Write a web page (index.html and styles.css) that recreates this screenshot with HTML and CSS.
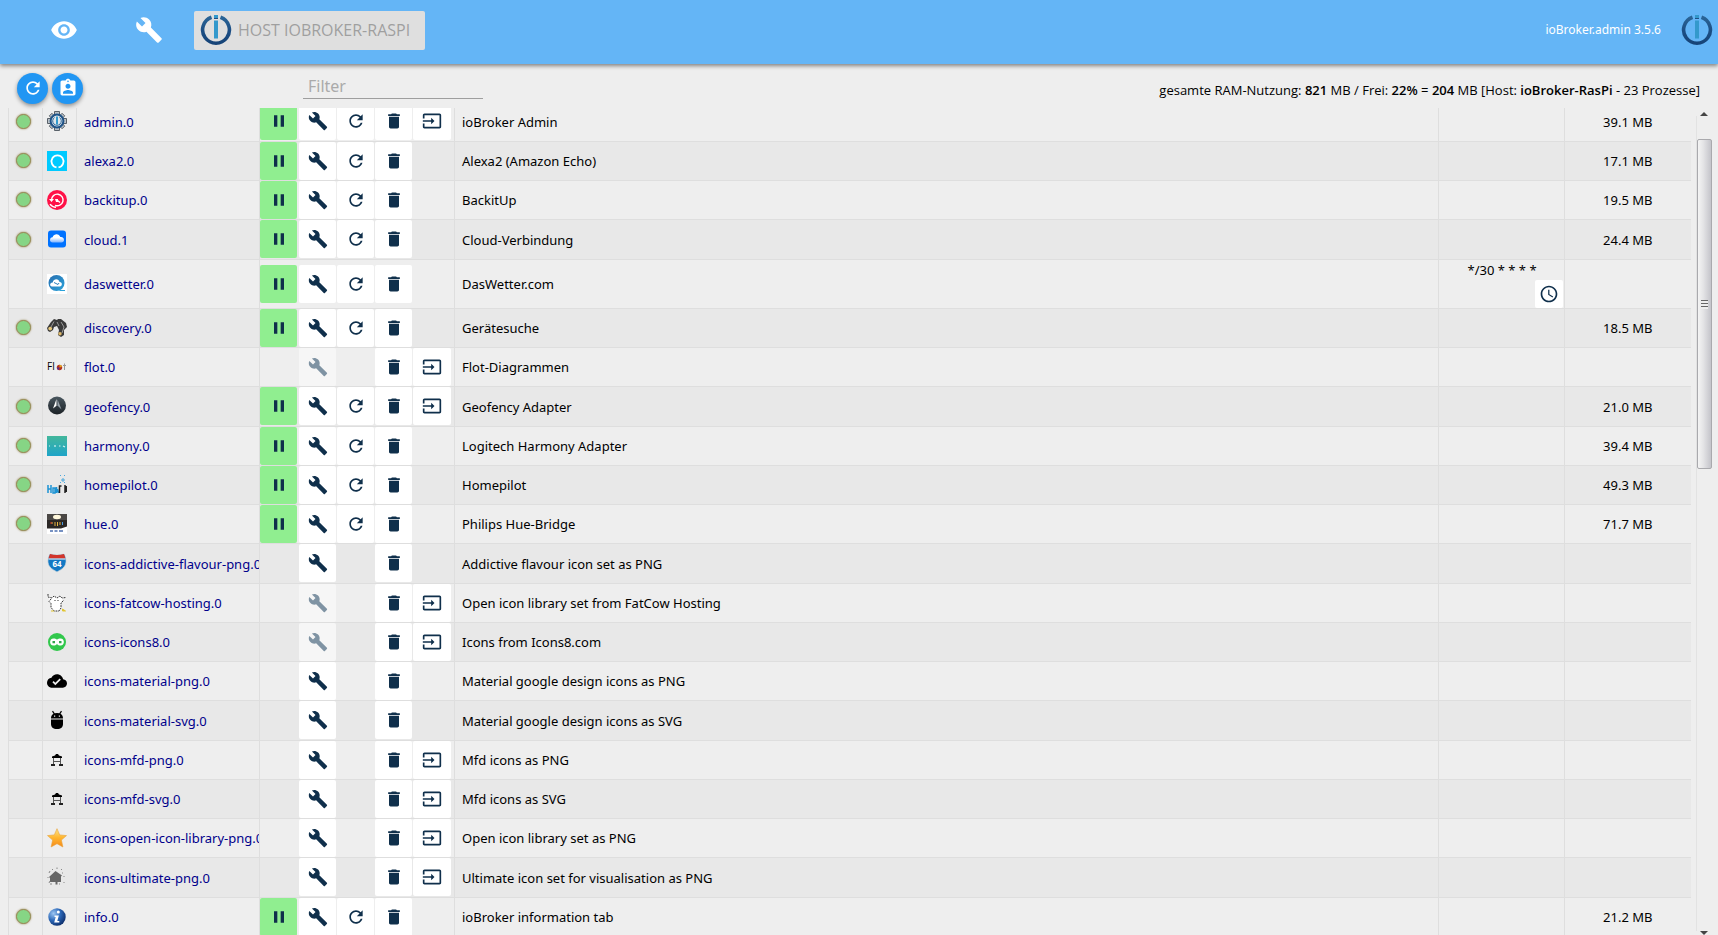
FILE: index.html
```
<!DOCTYPE html>
<html lang="de">
<head>
<meta charset="utf-8">
<title>ioBroker.admin</title>
<link rel="stylesheet" href="styles.css">
</head>
<body>
<svg class="sprite" aria-hidden="true">
  <defs>
    <linearGradient id="ring" x1="0" y1="0" x2="0" y2="1"><stop offset="0" stop-color="#2a6496"/><stop offset=".5" stop-color="#1d4f85"/><stop offset="1" stop-color="#164478"/></linearGradient>
    <linearGradient id="teal" x1="0" y1="0" x2="0" y2="1"><stop offset="0" stop-color="#43b79c"/><stop offset="1" stop-color="#1ea4c8"/></linearGradient>
    <linearGradient id="gold" x1="0" y1="0" x2="0" y2="1"><stop offset="0" stop-color="#fde58a"/><stop offset=".5" stop-color="#ffb52e"/><stop offset="1" stop-color="#f58a1c"/></linearGradient>
    <linearGradient id="slate" x1="0" y1="0" x2="0" y2="1"><stop offset="0" stop-color="#4a575f"/><stop offset="1" stop-color="#1b2126"/></linearGradient>
    <linearGradient id="cloudfill" x1="0" y1="0" x2="0" y2="1"><stop offset=".4" stop-color="#fff"/><stop offset="1" stop-color="#7fb4ff"/></linearGradient>
    <linearGradient id="sea" x1="0" y1="0" x2="1" y2="1"><stop offset="0" stop-color="#2a6fb0"/><stop offset="1" stop-color="#2aa2da"/></linearGradient>
    <radialGradient id="ball" cx=".3" cy=".3" r=".8"><stop offset="0" stop-color="#9cc6f2"/><stop offset=".5" stop-color="#2c68b8"/><stop offset="1" stop-color="#0b2a66"/></radialGradient>
  </defs>
  <symbol id="eye" viewBox="0 0 24 24"><path d="M12 4.500C7 4.500 2.730 7.610 1 12c1.730 4.390 6 7.500 11 7.500s9.270-3.110 11-7.500c-1.730-4.390-6-7.500-11-7.500zM12 17c-2.760 0-5-2.240-5-5s2.240-5 5-5 5 2.240 5 5-2.240 5-5 5zm0-8c-1.660 0-3 1.340-3 3s1.340 3 3 3 3-1.340 3-3-1.340-3-3-3z"/></symbol>
  <symbol id="build" viewBox="0 0 24 24"><path d="M22.700 19l-9.100-9.100c.9-2.300.4-5-1.500-6.900-2-2-5-2.400-7.400-1.300L9 6 6 9 1.600 4.700C.4 7.100.9 10.100 2.900 12.100c1.900 1.900 4.600 2.400 6.900 1.500l9.100 9.100c.4.4 1 .4 1.400 0l2.300-2.300c.5-.4.5-1.100.1-1.400z"/></symbol>
  <symbol id="refresh" viewBox="0 0 24 24"><path d="M17.650 6.350C16.200 4.900 14.210 4 12 4c-4.420 0-7.990 3.580-7.990 8s3.570 8 7.990 8c3.730 0 6.840-2.550 7.730-6h-2.080c-.82 2.330-3.040 4-5.650 4-3.310 0-6-2.690-6-6s2.690-6 6-6c1.660 0 3.140.69 4.220 1.780L13 11h7V4l-2.350 2.350z"/></symbol>
  <symbol id="badge" viewBox="0 0 24 24"><path d="M19 3h-4.180C14.400 1.840 13.300 1 12 1c-1.300 0-2.400.84-2.820 2H5c-1.100 0-2 .9-2 2v14c0 1.100.9 2 2 2h14c1.100 0 2-.9 2-2V5c0-1.100-.9-2-2-2zm-7 0c.55 0 1 .45 1 1s-.45 1-1 1-1-.45-1-1 .45-1 1-1zm0 4c1.660 0 3 1.340 3 3s-1.340 3-3 3-3-1.340-3-3 1.340-3 3-3zm6 12H6v-1.400c0-2 4-3.100 6-3.100s6 1.100 6 3.100V19z"/></symbol>
  <symbol id="pause" viewBox="0 0 24 24"><path d="M6 19h4V5H6v14zm8-14v14h4V5h-4z"/></symbol>
  <symbol id="delete" viewBox="0 0 24 24"><path d="M6 19c0 1.100.9 2 2 2h8c1.100 0 2-.9 2-2V7H6v12zM19 4h-3.500l-1-1h-5l-1 1H5v2h14V4z"/></symbol>
  <symbol id="input" viewBox="0 0 24 24"><path d="M21 3.010H3c-1.100 0-2 .9-2 2V9h2V4.990h18v14.030H3V15H1v4.010c0 1.100.9 1.980 2 1.980h18c1.100 0 2-.88 2-1.980v-14c0-1.110-.9-2-2-2zM11 16l4-4-4-4v3H1v2h10v3z"/></symbol>
  <symbol id="clock" viewBox="0 0 24 24"><path d="M11.990 2C6.470 2 2 6.480 2 12s4.470 10 9.990 10C17.520 22 22 17.520 22 12S17.520 2 11.990 2zM12 20c-4.420 0-8-3.580-8-8s3.580-8 8-8 8 3.580 8 8-3.580 8-8 8zm.5-13H11v6l5.250 3.150.75-1.230-4.500-2.670z"/></symbol>
  <symbol id="logo" viewBox="0 0 32 32"><path d="M11.500 3.200A13.400 13.400 0 1 0 20.500 3.200" fill="none" stroke="url(#ring)" stroke-width="3.600"/><path d="M14 1h4v3h-4zM14 6.500h4v18h-4z" fill="#3399cc"/><path d="M14 4h4v1h-4z" fill="#1d4f85"/></symbol>

  <symbol id="admin" viewBox="0 0 20 20"><g fill="#b9c0c6" stroke="#596169" stroke-width="1"><path d="M7.500.5h5v4h-5zM7.500 15.500h5v4h-5zM.5 7.500h4v5h-4zM15.500 7.500h4v5h-4z"/><path d="M2.300 4.900l2.600-2.600 3 3-2.600 2.600zM12.100 14.700l2.600-2.600 3 3-2.600 2.600zM15.100 2.300l2.600 2.600-3 3-2.600-2.600zM5.300 12.100l2.600 2.600-3 3-2.600-2.600z"/></g><circle cx="10" cy="10" r="6.400" fill="#dfe6ea" stroke="#1d5287" stroke-width="2"/><path d="M7.500 6.500a4.300 4.300 0 1 0 5 0" fill="none" stroke="#2a659b"/><path d="M9 5.500h2v8H9z" fill="#3399cc"/></symbol>
  <symbol id="alexa" viewBox="0 0 20 20"><path d="M0 0h20v20H0z" fill="#00caff"/><path d="M9.500 16.300a6 6 0 1 1 2 0" fill="none" stroke="#fff" stroke-width="1.800"/></symbol>
  <symbol id="backitup" viewBox="0 0 20 20"><circle cx="10" cy="10" r="10" fill="#ff1147"/><path d="M4.500 10A5.800 5.800 0 1 1 8 15.300M3 14.200a8 8 0 0 0 6 3.200M10 10l3 2.500" fill="none" stroke="#fff" stroke-width="1.400"/><path d="M2 9h5l-2.500 3zM8 9h3v3H9z" fill="#fff"/></symbol>
  <symbol id="cloud" viewBox="0 0 20 20"><rect x="1" y="1.500" width="18" height="17" rx="3" fill="#0072ff"/><path d="M3 11c0-2 1.500-2.700 2.600-2.700C6.500 5.700 9 5 10.500 5.500c1.500.3 2.500 1.300 2.800 2.500 2.600-.2 3.700 1.200 3.700 3 0 1.500-1 2.500-2.500 2.500h-9C4 13.500 3 12.500 3 11z" fill="url(#cloudfill)"/></symbol>
  <symbol id="daswetter" viewBox="0 0 20 20"><path d="M0 0h20v20H0z" fill="#fff"/><circle cx="9.500" cy="9" r="8" fill="url(#sea)"/><path d="M12 16h6v1h-5z" fill="#2aa2da"/><path d="M5 12.500c-3-.5-2-4.200.7-4C6.500 4 12 4.200 12.500 8c3-.3 3.200 4.200.3 4.500z" fill="#fff"/><path d="M7 8.500l4 2 1-1.500" fill="none" stroke="#2a7fbd"/></symbol>
  <symbol id="discovery" viewBox="0 0 20 20"><path d="M4 4l3-3 3 1 1-1h3l5 4 1 4-3 3v5l-3 2-3-2 1-5-2-4-3 1-1 3-3 2-2-1-1-3z" fill="#3a3a3a"/><path d="M7 3.500L4 9M14 4l3 5-2 6M10 4l2 4" stroke="#999" fill="none"/><circle cx="3.200" cy="10.600" r="1.900" fill="#e6c77b"/><circle cx="13" cy="15.800" r="1.700" fill="#dcb76a"/></symbol>
  <symbol id="flot" viewBox="0 0 20 20"><circle cx="12.500" cy="10.500" r="2.700" fill="#b3321f"/><path d="M12.500 10.500V7.800a2.700 2.700 0 0 1 2.600 2z" fill="#e4a51c"/><path d="M12.500 10.500h-2.700a2.700 2.700 0 0 0 2 2.600z" fill="#5c2a8c"/><path d="M17.500 6.500v6.500M16 8.500h3" stroke="#999"/></symbol>
  <symbol id="geofency" viewBox="0 0 20 20"><circle cx="10" cy="9.500" r="9" fill="url(#slate)"/><path d="M9.500 3L6 12.500l3.500-2.800z" fill="#fff"/><path d="M10.500 3.500v6l4 4z" fill="#98a3ab"/></symbol>
  <symbol id="harmony" viewBox="0 0 20 20"><path d="M0 0h20v20H0z" fill="url(#teal)"/><path d="M2 10h1M8 9v2M12 10h1.500M16 10l2 1" stroke="#d6f4f2" stroke-width="1.200"/></symbol>
  <symbol id="homepilot" viewBox="0 0 20 20"><path d="M1 10v8M4 10v8M1 14h3M6 13v5h2v-5zM9.500 18v-6M10.500 14l1 4" stroke="#1c93d3" fill="none" stroke-width="1.500"/><path d="M12.500 18v-7h2M18 10v8M19.500 11v6" stroke="#222" fill="none" stroke-width="1.500"/><path d="M15 6V4h2v2zM14 1l-1-1M17 1l1-1M13 8l1-1M18 8l-1-1" stroke="#4aa8dc" fill="none"/></symbol>
  <symbol id="hue" viewBox="0 0 20 20"><path d="M0 0h20v14l-5 4H0z" fill="#2a2725"/><path d="M0 0h20v6H0z" fill="#4a4745"/><ellipse cx="10" cy="3" rx="4" ry="2.200" fill="#fff8dc"/><path d="M5 8v2M8 8v4M10.500 8v4M13 8v3" stroke="#e3b341" stroke-width="1"/><path d="M4 8v2" stroke="#d1382a"/><path d="M15.500 8v3" stroke="#4b9be0"/><path d="M0 14.500h14l6-2V20H0z" fill="#fff"/><path d="M3 17h3M7.500 17h3M12 17h4" stroke="#4b6fb0" stroke-width="1.400"/></symbol>
  <symbol id="route" viewBox="0 0 20 20"><path d="M3 1q7 2 14 0c3 5 2.500 10 0 13-2 2.500-5 3.500-7 5-2-1.500-5-2.500-7-5C.5 11 0 6 3 1z" fill="#1379c4" stroke="#cfd8de" stroke-width=".7"/><path d="M3 1q7 2 14 0l1.500 4.500h-17z" fill="#d3352b"/><path d="M1.500 5.500h17v1h-17z" fill="#fff"/></symbol>
  <symbol id="cow" viewBox="0 0 20 20"><path d="M2 5q6-2 14 0l-2 5v5l-2 3H7l-3-3V10z" fill="#fff"/><path d="M1 1v3l4 1 2-2 3 2 3-2 2 2 4-.5M4 6L2 8.500l2 2v4l3 3.500h5l2-3v-5l3-3M8 7v1M11 7v1" fill="none" stroke="#333" stroke-dasharray="1.800 .9"/><path d="M4 18h3M15.500 16l3 2h-3z" stroke="#e1c533" fill="#e1c533"/></symbol>
  <symbol id="icons8" viewBox="0 0 20 20"><circle cx="10" cy="10" r="9" fill="#31c84c"/><path d="M6.500 6.500c-4.500 0-4.500 7 0 7 1.500 0 2.500-.5 3.500-1.500 1 1 2 1.500 3.500 1.500 4.500 0 4.500-7 0-7-1.500 0-2.500.5-3.500 1-1-.5-2-1-3.500-1z" fill="#fff"/><path d="M5.500 9h2.500v2.300H5.500zM12 9h2.500v2.300H12z" fill="#31a84c"/></symbol>
  <symbol id="clouddone" viewBox="0 0 24 24"><path d="M19.350 10.040C18.670 6.590 15.640 4 12 4 9.110 4 6.600 5.640 5.350 8.040 2.340 8.360 0 10.910 0 14c0 3.310 2.690 6 6 6h13c2.760 0 5-2.240 5-5 0-2.640-2.050-4.780-4.650-4.960zM10 17l-3.500-3.500 1.410-1.410L10 14.170 15.180 9l1.410 1.410L10 17z"/></symbol>
  <symbol id="android" viewBox="0 0 20 20"><path d="M4 9.500h12V14c0 3-2 5-6 5s-6-2-6-5zM4 8.500c0-2.300 1-3.800 2.500-4.700L5 1.500l1-.7 1.700 2.500a7 7 0 0 1 4.600 0L14 .8l1 .7-1.500 2.300C15 4.700 16 6.200 16 8.500z"/><path d="M7 5.500h1.200v1.200H7zM11.800 5.500H13v1.200h-1.200z" fill="#eee"/></symbol>
  <symbol id="pavilion" viewBox="0 0 20 20"><path d="M5 8V6.500l3-1L9 4h2l1 1.500 3 1V8z"/><path d="M6.500 8v7M13.500 8v7M7 11.500h6" stroke="#555" fill="none"/><path d="M4 15h4M12 15h4" stroke="#222" stroke-width="2"/></symbol>
  <symbol id="star" viewBox="0 0 20 20"><path d="M10 .7l2.700 6.200 6.800.7-5.100 4.500 1.500 6.900L10 15.700 4.100 19l1.500-6.900L.5 7.600l6.800-.7z" fill="url(#gold)" stroke="#e8a33a" stroke-width=".6"/></symbol>
  <symbol id="ultimate" viewBox="0 0 20 20"><path d="M8.500 4l6.500 4.500-1 1V15H10.500v2.500H8.500V15H3v-4l-1-1z" fill="#666"/><path d="M2 6l1-2M5 3l1-1M10 2V.5M14 3l1-1M15 6h1M2 16l1-2M1 10v1M17 15v1M12 17h1M5 17H3M17 9v1" stroke="#888"/></symbol>
  <symbol id="info" viewBox="0 0 20 20"><circle cx="10" cy="10" r="8.700" fill="url(#ball)"/><circle cx="11.300" cy="5" r="1.500" fill="#fff"/><path d="M7.500 8.500h4.300l-1.500 5.500h2v1.500H7.200L8.700 10H7.500z" fill="#fff"/></symbol>
</svg>

<header class="topbar">
  <button class="nav-button" type="button" aria-label="Sichtbarkeit"><svg><use href="#eye"/></svg></button>
  <button class="nav-button" type="button" aria-label="Einstellungen"><svg><use href="#build"/></svg></button>
  <button class="host-button" type="button"><svg><use href="#logo"/></svg>Host ioBroker-RasPi</button>
  <span class="version">ioBroker.admin 3.5.6</span>
  <svg class="brand"><use href="#logo"/></svg>
</header>

<main class="page">
  <div class="toolbar">
    <button class="round-button" type="button" aria-label="Aktualisieren"><svg><use href="#refresh"/></svg></button>
    <button class="round-button" type="button" aria-label="Expertenmodus"><svg><use href="#badge"/></svg></button>
    <input class="filter" type="text" placeholder="Filter" aria-label="Filter">
    <p class="memory">gesamte RAM-Nutzung: <b>821</b> MB / Frei: <b>22%</b> = <b>204</b> MB [Host: <b>ioBroker-RasPi</b> - 23 Prozesse]</p>
  </div>
  <div class="list">
    <div class="viewport">
      <table class="instances">
        <colgroup><col class="col-icon"><col class="col-icon"><col class="col-name"><col class="col-actions"><col><col class="col-schedule"><col class="col-memory"></colgroup>
        <tbody id="rows"></tbody>
      </table>
    </div>
    <div class="scrollbar" aria-hidden="true">
      <span class="arrow arrow-up"></span>
      <span class="track"><span class="thumb"><span class="grip"></span></span></span>
      <span class="arrow arrow-down"></span>
    </div>
  </div>
</main>
<script src="app.js"></script>
</body>
</html>
```
FILE: styles.css
```
* { box-sizing: border-box; }
body {
  margin: 0;
  height: 100vh;
  display: flex;
  flex-direction: column;
  overflow: hidden;
  background: #eee;
  color: #000;
  font: 13px/20px "Noto Sans", "Open Sans", sans-serif;
}
button { margin: 0; padding: 0; border: 0; font: inherit; cursor: pointer; }
svg { display: block; fill: currentColor; }
.sprite { position: absolute; width: 0; height: 0; }

.topbar {
  flex: none;
  height: 64px;
  display: flex;
  align-items: center;
  padding: 0 5px 4px 22px;
  background: #64b5f6;
  color: #fff;
  box-shadow: 0 2px 4px rgba(0, 0, 0, .45);
  z-index: 1;
}
.nav-button { width: 85px; height: 60px; padding: 0 28px; background: none; color: #fff; }
.nav-button svg { width: 28px; height: 28px; }
.host-button {
  display: flex;
  align-items: center;
  gap: 6px;
  height: 39px;
  margin: 0 auto 0 2px;
  padding: 0 15px 0 6px;
  border-radius: 2px;
  background: #dfdfdf;
  color: #9f9f9f;
  font-family: "Open Sans", sans-serif;
  font-size: 16px;
  text-transform: uppercase;
}
.host-button svg, .brand { width: 32px; height: 32px; }
.version { margin-right: 20px; font-size: 12px; }

.page { flex: 1; min-height: 0; display: flex; flex-direction: column; }
.toolbar { flex: none; height: 44px; display: flex; align-items: center; gap: 4px; padding: 4px 18px 0 17px; }
.round-button {
  display: grid;
  place-items: center;
  width: 31px;
  height: 31px;
  border-radius: 50%;
  background: #2196f3;
  color: #fff;
  box-shadow: 0 2px 4px rgba(0, 0, 0, .4);
}
.round-button svg { width: 20px; height: 20px; }
.filter {
  width: 180px;
  height: 26px;
  margin: 0 0 4px 216px;
  padding: 0 5px;
  border: 0;
  border-bottom: 1px solid #9e9e9e;
  background: none;
  font: inherit;
  font-size: 16px;
}
.filter::placeholder { color: #aaa; opacity: 1; }
.memory { margin: 4px 0 0 auto; font-size: 13px; font-family: "Open Sans", sans-serif; }
.memory b { font-weight: 600; }

.list { flex: 1; min-height: 0; display: flex; padding-left: 8px; }
.viewport { flex: 1; overflow: hidden; }
.instances { width: 100%; margin-top: -6px; border-collapse: collapse; table-layout: fixed; }
.col-icon { width: 34px; }
.col-name { width: 183px; }
.col-actions { width: 195px; }
.col-schedule { width: 126px; }
.col-memory { width: 127px; }
.instances tr { height: 39px; }
.instances tr:nth-child(4n) { height: 40px; }
.instances tr.scheduled { height: 49px; }
.instances tr:nth-child(even) { background: #e8e8e8; }
.instances td { padding: 0; border-bottom: 1px solid #dedede; border-left: 1px solid #dedede; white-space: nowrap; }
.instances .name { padding: 1px 0 0 7px; overflow: hidden; color: #00008b; }
.instances .title { padding: 1px 0 0 7px; }
.instances .memory-use { padding-top: 1px; text-align: center; }
.led {
  display: block;
  width: 15px;
  height: 15px;
  margin-left: 7px;
  border: 1px solid #9b8a58;
  border-radius: 50%;
  background: #86d585;
  box-shadow: 0 0 2px #8a7a40;
}
.adapter-icon { width: 20px; height: 20px; margin-left: 4px; color: #000; }
.flot-text { font: 10px "Open Sans", sans-serif; }
.route-text { font: bold 8px "Open Sans", sans-serif; fill: #fff; text-anchor: middle; }

.actions { display: grid; grid-template-columns: 38px repeat(3, 37px) 38px; column-gap: 1px; height: 38px; }
.action { display: grid; place-items: center; border-radius: 2px; background: #fff; color: #0f2f4b; }
.action svg { width: 20px; height: 20px; }
.action.running { margin-right: 1px; background: #90ee90; }
.action:disabled { background: #f6f6f6; color: #7f93a3; }
.schedule { display: flex; flex-direction: column; padding: 0 1px 0 29px; }
.schedule .action { align-self: flex-end; width: 28px; height: 28px; }

.scrollbar { flex: none; width: 27px; display: flex; flex-direction: column; align-items: center; padding: 4px 6px 0 5px; }
.arrow { border: 4px solid transparent; }
.arrow-up { border-top: 0; border-bottom-color: #444; }
.arrow-down { border-bottom: 0; border-top-color: #444; }
.track { flex: 1; width: 16px; padding-top: 23px; border-left: 1px solid #e2e2e2; }
.thumb {
  display: grid;
  place-items: center;
  width: 15px;
  height: 330px;
  border: 1px solid #a9a9ad;
  border-radius: 2px;
  background: linear-gradient(90deg, #f4f4f4, #e4e4e6 40%, #c4c4ca);
}
.grip { width: 7px; height: 9px; background: repeating-linear-gradient(#666 0 1px, #eee 1px 3px); }
```
FILE: app.js
```
// Action columns: p = pause, w = settings, x = settings disabled, r = restart, d = delete, l = open link
const instances = [
  ["admin", "admin.0", "ioBroker Admin", "pwrdl", "39.1 MB"],
  ["alexa", "alexa2.0", "Alexa2 (Amazon Echo)", "pwrd", "17.1 MB"],
  ["backitup", "backitup.0", "BackitUp", "pwrd", "19.5 MB"],
  ["cloud", "cloud.1", "Cloud-Verbindung", "pwrd", "24.4 MB"],
  ["daswetter", "daswetter.0", "DasWetter.com", "pwrd", "", "*/30 * * * *"],
  ["discovery", "discovery.0", "Gerätesuche", "pwrd", "18.5 MB"],
  ["flot", "flot.0", "Flot-Diagrammen", " x dl", ""],
  ["geofency", "geofency.0", "Geofency Adapter", "pwrdl", "21.0 MB"],
  ["harmony", "harmony.0", "Logitech Harmony Adapter", "pwrd", "39.4 MB"],
  ["homepilot", "homepilot.0", "Homepilot", "pwrd", "49.3 MB"],
  ["hue", "hue.0", "Philips Hue-Bridge", "pwrd", "71.7 MB"],
  ["route", "icons-addictive-flavour-png.0", "Addictive flavour icon set as PNG", " w d", ""],
  ["cow", "icons-fatcow-hosting.0", "Open icon library set from FatCow Hosting", " x dl", ""],
  ["icons8", "icons-icons8.0", "Icons from Icons8.com", " x dl", ""],
  ["clouddone", "icons-material-png.0", "Material google design icons as PNG", " w d", ""],
  ["android", "icons-material-svg.0", "Material google design icons as SVG", " w d", ""],
  ["pavilion", "icons-mfd-png.0", "Mfd icons as PNG", " w dl", ""],
  ["pavilion", "icons-mfd-svg.0", "Mfd icons as SVG", " w dl", ""],
  ["star", "icons-open-icon-library-png.0", "Open icon library set as PNG", " w dl", ""],
  ["ultimate", "icons-ultimate-png.0", "Ultimate icon set for visualisation as PNG", " w dl", ""],
  ["info", "info.0", "ioBroker information tab", "pwrd", "21.2 MB"]
];

// Lettering that sits on top of an adapter icon
const iconText = {
  flot: '<text class="flot-text" x="0" y="13">Fl</text>',
  route: '<text class="route-text" x="10" y="14">64</text>'
};

const actions = {
  p: ["pause", "Anhalten"],
  w: ["build", "Einstellungen"],
  x: ["build", "Einstellungen"],
  r: ["refresh", "Neu starten"],
  d: ["delete", "Löschen"],
  l: ["input", "Öffnen"]
};

function actionButton(code) {
  if (code === " ") return "<span></span>";
  const [icon, label] = actions[code];
  return `<button type="button" class="action${code === "p" ? " running" : ""}" aria-label="${label}"${code === "x" ? " disabled" : ""}><svg><use href="#${icon}"/></svg></button>`;
}

document.getElementById("rows").innerHTML = instances.map(([icon, name, title, codes, memory, cron]) => `
  <tr${cron ? ' class="scheduled"' : ""}>
    <td>${memory ? '<span class="led"></span>' : ""}</td>
    <td><svg class="adapter-icon"><use href="#${icon}"/>${iconText[icon] || ""}</svg></td>
    <td class="name">${name}</td>
    <td><div class="actions">${[...codes].map(actionButton).join("")}</div></td>
    <td class="title">${title}</td>
    <td>${cron ? `<div class="schedule"><span>${cron}</span><button type="button" class="action" aria-label="Zeitplan"><svg><use href="#clock"/></svg></button></div>` : ""}</td>
    <td class="memory-use">${memory}</td>
  </tr>`).join("");
```
